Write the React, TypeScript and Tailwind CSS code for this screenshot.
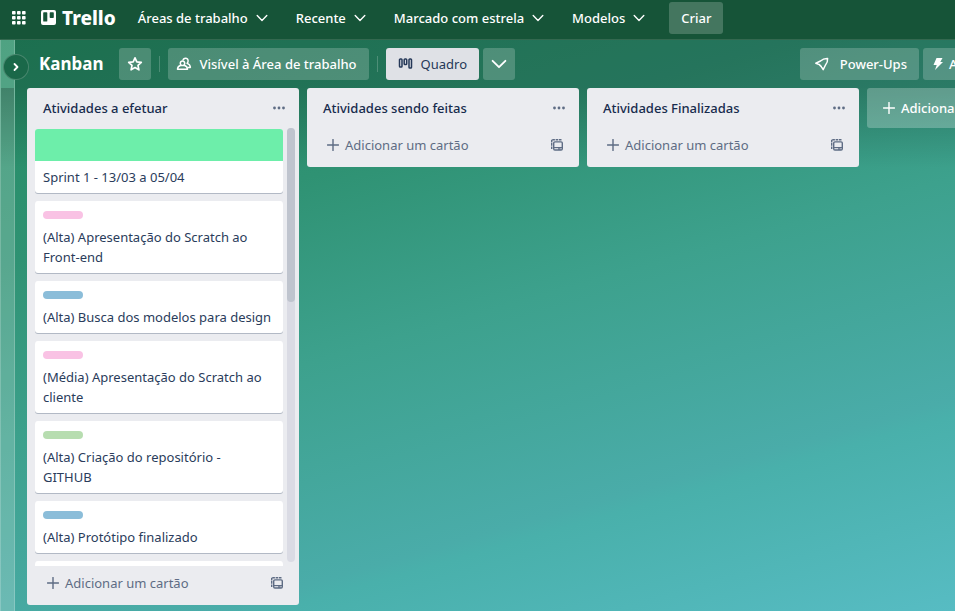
import type { ReactNode } from "react";

const LABELS = {
  pink: "bg-[#f9c2e4]",
  blue: "bg-[#8bbdd9]",
  green: "bg-[#b7ddb0]",
};

type Card = { text?: string; label?: keyof typeof LABELS; cover?: boolean };

const CARDS: Card[] = [
  { text: "Sprint 1 - 13/03 a 05/04", cover: true },
  { text: "(Alta) Apresentação do Scratch ao Front-end", label: "pink" },
  { text: "(Alta) Busca dos modelos para design", label: "blue" },
  { text: "(Média) Apresentação do Scratch ao cliente", label: "pink" },
  { text: "(Alta) Criação do repositório -\nGITHUB", label: "green" },
  { text: "(Alta) Protótipo finalizado", label: "blue" },
  { label: "pink" },
];

function Chevron({ className = "size-3" }: { className?: string }) {
  return (
    <svg viewBox="0 0 12 12" className={className} fill="none" stroke="currentColor" strokeWidth="1.4" strokeLinecap="round" strokeLinejoin="round" aria-hidden="true">
      <path d="M1.2 3.6 6 8.4l4.8-4.8" />
    </svg>
  );
}

function Plus() {
  return (
    <svg viewBox="0 0 12 12" className="size-3 shrink-0" fill="none" stroke="currentColor" strokeWidth="1.4" strokeLinecap="round" aria-hidden="true">
      <path d="M6 .5v11M.5 6h11" />
    </svg>
  );
}

function TemplateIcon() {
  return (
    <svg viewBox="0 0 12 12" className="size-3" fill="none" stroke="currentColor" aria-hidden="true">
      <path d="M.7 10V.7h9.8" strokeWidth="1.4" strokeDasharray="2.6 .7" />
      <rect x="2.7" y="2.9" width="8.6" height="8.1" rx="1.2" strokeWidth="1.4" />
      <path d="M3 8.6h8" strokeWidth="1.2" />
      <path d="M7 10h2.5" strokeWidth="1.4" />
    </svg>
  );
}

function NavMenu({ children }: { children: ReactNode }) {
  return (
    <button type="button" className="flex h-8 items-center gap-2 px-3 whitespace-nowrap">
      {children}
      <Chevron />
    </button>
  );
}

function AddCard() {
  return (
    <div className="flex shrink-0 justify-between pr-4 pb-[5px] pl-5 text-[#5e6c84]">
      <button type="button" className="flex h-[34px] items-center gap-1.5">
        <Plus />
        Adicionar um cartão
      </button>
      <button type="button" aria-label="Criar a partir de modelo" className="flex h-[34px] items-center">
        <TemplateIcon />
      </button>
    </div>
  );
}

function CardItem({ card }: { card: Card }) {
  return (
    <li className="shrink-0 overflow-hidden rounded-[3px] bg-white shadow-[0_1px_0_#091e4240]">
      {card.cover && <div className="h-8 bg-[#6deeaa]" />}
      <div className={card.cover ? "px-2 py-1.5" : "px-2 pt-2.5 pb-1.5"}>
        {card.label && <div className={`mb-2 h-2 w-10 rounded-full ${LABELS[card.label]}`} />}
        {card.text && <p className="whitespace-pre-line text-[#2a3c5b]">{card.text}</p>}
      </div>
    </li>
  );
}

function List({ title, cards }: { title: string; cards?: Card[] }) {
  return (
    <section className="flex max-h-full w-68 shrink-0 flex-col rounded-[3px] bg-[#ebecf0] text-[#172b4d]">
      <header className="flex h-10 shrink-0 items-center justify-between pr-3.5 pl-4">
        <h2 className="font-medium">{title}</h2>
        <button type="button" aria-label="Ações da lista" className="text-[#5e6c84]">
          <svg viewBox="0 0 12 4" className="h-1 w-3" fill="currentColor" aria-hidden="true">
            <circle cx="1.5" cy="2" r="1.4" />
            <circle cx="6" cy="2" r="1.4" />
            <circle cx="10.5" cy="2" r="1.4" />
          </svg>
        </button>
      </header>
      {cards && (
        <div className="flex min-h-0 flex-1 gap-1 pr-1 pl-2">
          <ul className="flex min-h-0 flex-1 flex-col gap-2 overflow-hidden pt-px">
            {cards.map((card, i) => (
              <CardItem key={i} card={card} />
            ))}
          </ul>
          <div className="mb-1 w-2 shrink-0 rounded-full bg-[#dadbe4]">
            <div className="h-2/5 rounded-full bg-[#bfc4ce]" />
          </div>
        </div>
      )}
      <AddCard />
    </section>
  );
}

export default function App() {
  return (
    <div className="flex h-screen flex-col overflow-hidden bg-linear-[164deg,#228a60_0%,#2f9273_30%,#3da18d_51%,#4aaca9_76%,#49b0ab_78%,#57bcc3_100%] font-['Noto_Sans','Open_Sans',sans-serif] text-[13px] leading-5 text-white">
      <nav className="flex h-10 shrink-0 items-center border-b border-[#33684f] bg-[#165438] pb-1 pl-3">
        <button type="button" aria-label="Mais da Atlassian" className="mr-[15px]">
          <svg viewBox="0 0 14 14" className="size-3.5" fill="currentColor" aria-hidden="true">
            {[0, 5, 10].map((y) => [0, 5, 10].map((x) => <rect key={`${x}-${y}`} x={x} y={y} width="3.6" height="3.6" rx=".8" />))}
          </svg>
        </button>
        <a href="#" className="mr-2.5 flex items-center gap-1.5 text-[19px] leading-8 font-extrabold">
          <svg viewBox="0 0 15 15" className="size-[15px]" aria-hidden="true">
            <path fill="currentColor" fillRule="evenodd" d="M2 0h11a2 2 0 0 1 2 2v11a2 2 0 0 1-2 2H2a2 2 0 0 1-2-2V2a2 2 0 0 1 2-2Zm.9 2.2a.7.7 0 0 0-.7.7v8a.7.7 0 0 0 .7.7h2.7a.7.7 0 0 0 .7-.7v-8a.7.7 0 0 0-.7-.7Zm6.5 0a.7.7 0 0 0-.7.7v4.3a.7.7 0 0 0 .7.7h2.7a.7.7 0 0 0 .7-.7V2.9a.7.7 0 0 0-.7-.7Z" />
          </svg>
          Trello
        </a>
        <div className="flex items-center gap-1 font-medium">
          <NavMenu>Áreas de trabalho</NavMenu>
          <NavMenu>Recente</NavMenu>
          <NavMenu>Marcado com estrela</NavMenu>
          <NavMenu>Modelos</NavMenu>
          <button type="button" className="ml-2 h-8 rounded-[3px] bg-white/20 px-3">Criar</button>
        </div>
      </nav>
      <div className="flex min-h-0 flex-1">
        <aside className="relative flex w-[15px] shrink-0 flex-col border-x border-white/20 bg-white/20 pt-12">
          <div className="h-20 bg-linear-to-b from-black/20 to-transparent" />
          <button type="button" aria-label="Expandir barra lateral" className="absolute top-3.5 left-0.5 flex size-[26px] items-center justify-center rounded-full border border-white/20 bg-[#1a6849]">
            <svg viewBox="0 0 10 10" className="size-2.5" fill="none" stroke="currentColor" strokeWidth="1.8" strokeLinecap="round" strokeLinejoin="round" aria-hidden="true">
              <path d="m3.5 2 3 3-3 3" />
            </svg>
          </button>
        </aside>
        <main className="flex min-w-0 flex-1 flex-col">
          <header className="flex h-12 shrink-0 items-center bg-black/20 pl-6 whitespace-nowrap">
            <h1 className="mr-[15px] text-[17px] font-bold">Kanban</h1>
            <button type="button" aria-label="Favoritar quadro" className="flex size-8 items-center justify-center rounded-[3px] bg-white/20">
              <svg viewBox="0 0 16 16" className="size-4" fill="none" stroke="currentColor" strokeWidth="1.7" strokeLinejoin="round" aria-hidden="true">
                <path d="m8 1.8 1.8 4.1 4.5.5-3.3 3 .9 4.4L8 11.6l-3.9 2.2.9-4.4-3.3-3 4.5-.5Z" />
              </svg>
            </button>
            <span className="mx-2 h-4 w-px bg-white/20" />
            <button type="button" className="flex h-8 items-center gap-2 rounded-[3px] bg-white/20 px-2 pr-3 font-medium">
              <svg viewBox="0 0 16 16" className="size-4" fill="none" stroke="currentColor" strokeWidth="1.5" strokeLinejoin="round" aria-hidden="true">
                <path d="M6.5 5a2.2 2.2 0 0 1 2.2 2.2c0 1.2-.8 2.3-2.2 2.3S4.3 8.4 4.3 7.2A2.2 2.2 0 0 1 6.5 5ZM1.500 13.300c0-2 1.400-3.300 3.400-4 1 .4 2.200.4 3.200 0 2 .7 3.400 2 3.400 4Z" />
                <path d="M7 4.500C7.200 3 8.300 2.300 9.600 2.300c1.600 0 2.600 1.200 2.500 2.800 0 1-.5 1.800-1 2.300 1.900.7 3.200 1.800 3.300 4h-2.900" />
              </svg>
              Visível à Área de trabalho
            </button>
            <span className="mx-2 h-4 w-px bg-white/20" />
            <button type="button" className="flex h-8 items-center gap-2 rounded-[3px] bg-[#dfe1e6] px-3 text-[#253858]">
              <svg viewBox="0 0 15 12" className="h-3 w-[15px]" fill="none" stroke="currentColor" strokeWidth="1.5" aria-hidden="true">
                <rect x="1.5" y="1" width="2.5" height="8" rx=".8" />
                <rect x="6.2" y="1" width="2.5" height="5.5" rx=".8" />
                <rect x="11" y="1" width="2.5" height="9" rx=".8" />
              </svg>
              Quadro
            </button>
            <button type="button" aria-label="Mais visualizações" className="ml-1 flex size-8 items-center justify-center rounded-[3px] bg-white/20">
              <Chevron className="size-4" />
            </button>
            <div className="ml-auto flex min-w-0 justify-end gap-1 font-medium">
              <button type="button" className="flex h-8 items-center gap-2.5 rounded-[3px] bg-white/20 pr-3 pl-3.5">
                <svg viewBox="0 0 16 16" className="size-4" fill="none" stroke="currentColor" strokeWidth="1.5" strokeLinejoin="round" strokeLinecap="round" aria-hidden="true">
                  <path d="M13.600 2.400C11 2.300 8.500 3.100 6.500 5L1.800 7.200l3.500 1.400M13.600 2.400c.2 2.600-.5 4.800-2.100 6.600l-2.300 4.600-1.900-3M5.300 8.600l2 2" />
                </svg>
                Power-Ups
              </button>
              <button type="button" className="flex h-8 w-8 items-center gap-1 overflow-hidden rounded-l-[3px] bg-white/20 pl-2">
                <svg viewBox="0 0 14 14" className="size-3.5 shrink-0" fill="currentColor" aria-hidden="true">
                  <path d="M5.500 1h6L9.300 5H12L4 13l1.700-5H2.500Z" />
                </svg>
                Automação
              </button>
            </div>
          </header>
          <div className="flex min-h-0 flex-1 items-start gap-2 overflow-hidden bg-[linear-gradient(#0003,#0000_80px)] pb-1.5 pl-3">
            <List title="Atividades a efetuar" cards={CARDS} />
            <List title="Atividades sendo feitas" />
            <List title="Atividades Finalizadas" />
            <button type="button" className="flex h-10 w-68 shrink-0 items-center gap-1.5 rounded-[3px] bg-white/25 pl-4 font-medium">
              <Plus />
              Adicionar outra lista
            </button>
          </div>
        </main>
      </div>
    </div>
  );
}
